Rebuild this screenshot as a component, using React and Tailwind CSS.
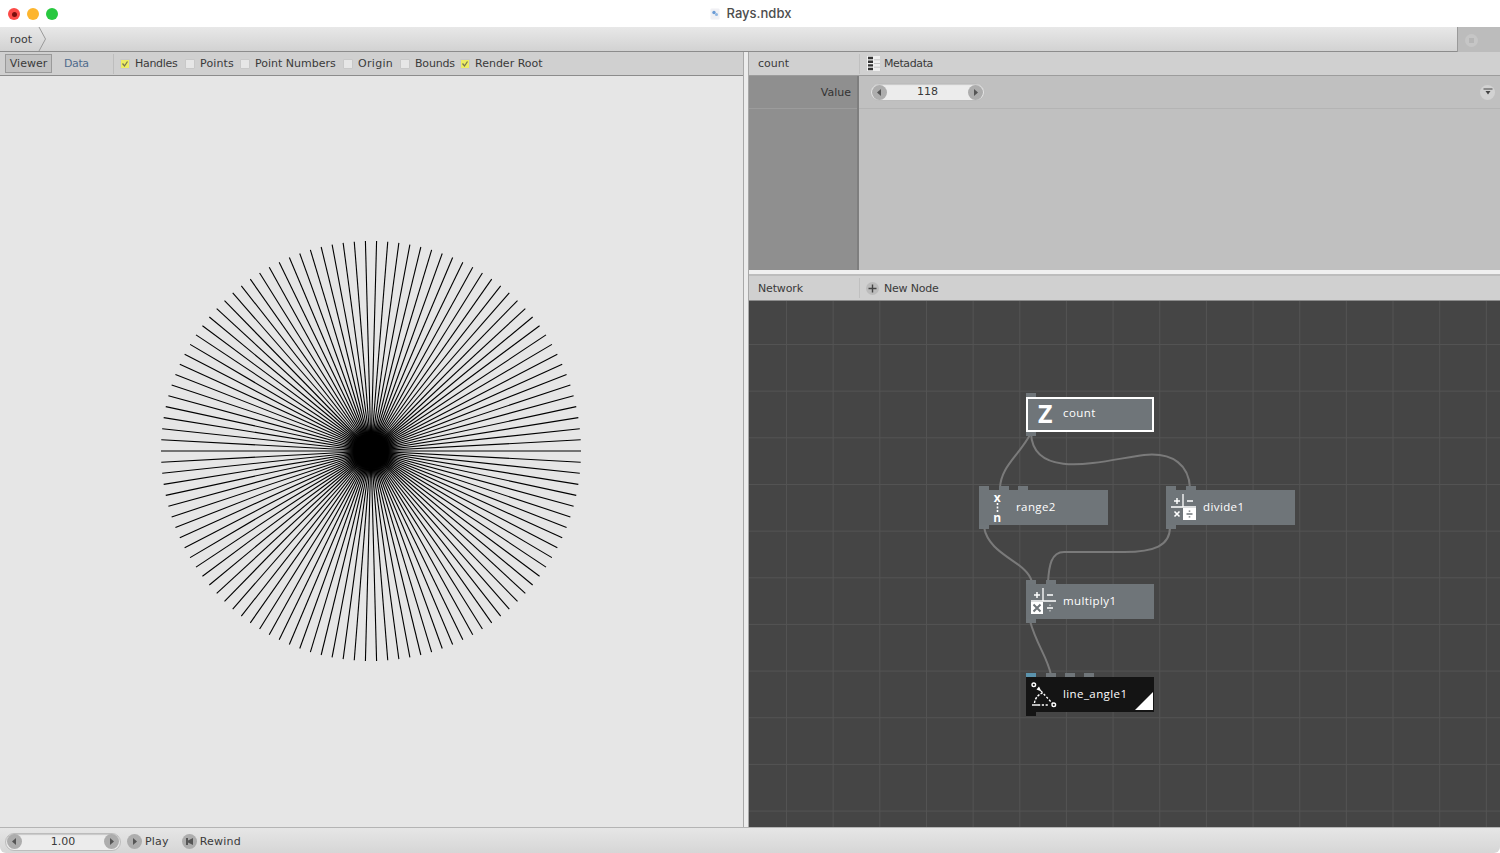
const rays = Array.from({ length: 118 }, (_, i) => (i * 2 * Math.PI) / 118)

function Rays() {
  return (
    <svg width="440" height="440" viewBox="0 0 440 440" className="block">
      <defs>
        <radialGradient id="core">
          <stop offset="0.62" stopColor="#000" stopOpacity="1" />
          <stop offset="1" stopColor="#000" stopOpacity="0" />
        </radialGradient>
      </defs>
      {rays.map((a, i) => (
        <line key={i} x1="220" y1="220" x2={220 + 210 * Math.cos(a)} y2={220 + 210 * Math.sin(a)} stroke="#000" strokeWidth="1.1" />
      ))}
      <circle cx="220" cy="220" r="28" fill="url(#core)" />
    </svg>
  )
}

function Check({ label, checked, className = '' }) {
  return (
    <div className={`flex items-center ${className}`}>
      <span className={`relative mr-[5px] h-[10px] w-[10px] rounded-[1px] border border-[#c8c8c8] ${checked ? 'bg-[#ecec62]' : 'bg-[#e6e6e6]'}`}>
        {checked && (
          <svg width="8" height="8" viewBox="0 0 8 8" className="absolute left-0 top-0">
            <path d="M1.5 3.5 L3.5 6 L6.5 1.5" stroke="#7a7a50" strokeWidth="1.3" fill="none" />
          </svg>
        )}
      </span>
      <span className="pt-[2px]">{label}</span>
    </div>
  )
}

function RoundBtn({ dir }) {
  return (
    <span className="flex h-[15px] w-[15px] items-center justify-center rounded-full bg-[#adadad]">
      <svg width="9" height="9" viewBox="0 0 9 9">
        {dir === 'left' && <path d="M6 1 L2 4.5 L6 8 Z" fill="#555" />}
        {dir === 'right' && <path d="M3 1 L7 4.5 L3 8 Z" fill="#555" />}
        {dir === 'rewind' && <path d="M1 1 H3 V3.5 L8 1 V8 L3 5.5 V8 H1 Z" fill="#555" />}
      </svg>
    </span>
  )
}

function Stepper({ value, className = '' }) {
  return (
    <div className={`flex h-[18px] items-center justify-between rounded-full border border-[#bcbcbc] bg-[#ececec] px-[1px] shadow-[inset_0_1px_1px_#c8c8c8] ${className}`}>
      <RoundBtn dir="left" />
      <span className="pt-[1px]">{value}</span>
      <RoundBtn dir="right" />
    </div>
  )
}

function Port({ left, color = 'bg-[#70767a]' }) {
  return <span className={`absolute top-[-4px] h-[4px] w-[10px] ${color}`} style={{ left }} />
}

function Node({ x, y, w = 128, label, dark, selected, ports, icon }) {
  return (
    <div className="absolute h-[35px]" style={{ left: x, top: y, width: w }}>
      {ports.map((p, i) => (
        <Port key={i} left={p} color={dark && i === 0 ? 'bg-[#5b93ad]' : 'bg-[#70767a]'} />
      ))}
      <div className={`flex h-full w-full items-center font-['Open_Sans',sans-serif] text-[11.5px] tracking-[0.4px] text-white ${dark ? 'bg-[#141414]' : 'bg-[#6f7579]'} ${selected ? 'border-2 border-white' : ''}`}>
        <span className={`flex shrink-0 items-center justify-center ${selected ? 'w-[35px]' : 'w-[37px]'}`}>{icon}</span>
        <span className={selected ? 'pb-[3px]' : 'pb-[2px]'}>{label}</span>
      </div>
      <span className={`absolute bottom-[-4px] left-0 h-[4px] w-[10px] ${dark ? 'bg-[#141414]' : 'bg-[#70767a]'}`} />
      {dark && (
        <svg width="18" height="18" viewBox="0 0 18 18" className="absolute bottom-[2px] right-[1px]">
          <path d="M18 0 V18 H0 Z" fill="#fff" />
        </svg>
      )}
    </div>
  )
}

function MathIcon({ filled }) {
  return (
    <svg width="28" height="28" viewBox="0 0 28 28" stroke="#fff" fill="none" strokeWidth="1.3" className="ml-[-1px] mt-[-2px]">
      <path d="M13 1 V14 M1 14 H26" />
      <path d="M4 8 H10 M7 5 V11 M17 8 H23" strokeWidth="1.5" />
      {filled === 'times' ? (
        <>
          <rect x="1" y="15" width="12" height="12" fill="#fff" stroke="none" />
          <path d="M3.5 17.5 L10.5 24.5 M10.5 17.5 L3.5 24.5" stroke="#6f7579" strokeWidth="2" />
          <path d="M17 21 H23 M20 17.8 V18.4 M20 23.6 V24.2" strokeWidth="1.5" />
        </>
      ) : (
        <>
          <path d="M4.5 18.5 L9.5 23.5 M9.5 18.5 L4.5 23.5" strokeWidth="1.6" />
          <rect x="13" y="15" width="13" height="12" fill="#fff" stroke="none" />
          <path d="M16.5 21 H22.5 M19.5 17.4 V18.8 M19.5 23.2 V24.6" stroke="#6f7579" strokeWidth="1.6" />
        </>
      )}
    </svg>
  )
}

function RangeIcon() {
  return (
    <span className="flex flex-col items-center text-[12px] font-bold leading-[9px] text-white">
      <span>x</span>
      <svg width="3" height="9" viewBox="0 0 3 9" className="my-[1px]">
        <path d="M1.5 0 V2 M1.5 3.5 V5.5 M1.5 7 V9" stroke="#fff" strokeWidth="1.6" />
      </svg>
      <span>n</span>
    </span>
  )
}

function LineAngleIcon() {
  return (
    <svg width="30" height="30" viewBox="0 0 30 30" fill="none" stroke="#fff" strokeWidth="1.4">
      <circle cx="3.8" cy="4.8" r="1.8" />
      <path d="M9 6.5 L11.5 11.5 L6.5 9.5 Z" fill="#fff" stroke="none" />
      <path d="M11 11 L22.5 23.5" strokeDasharray="2.2 1.8" />
      <path d="M4.5 23 C5 18.5 8 14.5 12.5 13" strokeDasharray="2.4 1.4" />
      <path d="M2 25 H8" />
      <path d="M8 25 H19" strokeDasharray="2.2 1.6" />
      <circle cx="23.8" cy="24.8" r="1.8" />
    </svg>
  )
}

export default function App() {
  return (
    <div className="flex h-[853px] w-[1500px] flex-col overflow-hidden bg-white font-['DejaVu_Sans',sans-serif] text-[11px] text-[#3a3a3a]">
      {/* title bar */}
      <div className="relative flex h-[27px] shrink-0 items-center justify-center bg-white">
        <div className="absolute left-[8px] top-[8px] flex gap-[7px]">
          <span className="flex h-[12px] w-[12px] items-center justify-center rounded-full bg-[#fc4a47]">
            <span className="h-[5px] w-[5px] rounded-full bg-[#7a0f0d]" />
          </span>
          <span className="h-[12px] w-[12px] rounded-full bg-[#fdb52e]" />
          <span className="h-[12px] w-[12px] rounded-full bg-[#27c83f]" />
        </div>
        <div className="flex items-center font-['Inter',sans-serif] text-[13px] font-medium text-[#4d4d4d]">
          <svg width="12" height="12" viewBox="0 0 12 12" className="mr-[6px]">
            <rect x="1.5" y="0.5" width="9" height="11" rx="1" fill="#f0f0f4" />
            <circle cx="5" cy="4.5" r="1.7" fill="#6b9bd6" />
            <circle cx="7.5" cy="6.5" r="1.5" fill="#8fb6e2" />
          </svg>
          Rays.ndbx
        </div>
      </div>

      {/* breadcrumb */}
      <div className="flex h-[25px] shrink-0 items-stretch">
        <div className="relative flex flex-1 items-center border-b border-[#8c8c8c] bg-gradient-to-b from-[#e8e8e8] to-[#d2d2d2] pl-[10px]">
          <span className="pt-[2px]">root</span>
          <svg width="10" height="24" viewBox="0 0 10 24" className="absolute left-[38px] top-0">
            <path d="M1 0 L7.5 12 L1 24" fill="none" stroke="#9a9a9a" />
          </svg>
        </div>
        <div className="flex w-[43px] items-center border-l border-[#9a9a9a] bg-[#bcbcbc] pl-[7px] pt-[1px]">
          <span className="flex h-[13px] w-[13px] items-center justify-center rounded-full bg-[#c6c6c6]">
            <span className="h-[5px] w-[5px] bg-[#b6b6b6]" />
          </span>
        </div>
      </div>

      <div className="flex min-h-0 flex-1">
        {/* viewer */}
        <div className="flex w-[743px] shrink-0 flex-col">
          <div className="flex h-[24px] shrink-0 items-center border-b border-[#8c8c8c] bg-[#d0d0d0]">
            <div className="ml-[5px] flex h-[19px] w-[47px] items-center justify-center border border-[#9a9a9a] bg-[#c2c2c2] pt-[1px]">Viewer</div>
            <span className="ml-[12px] w-[25px] pt-[2px] tracking-[-0.4px] text-[#4f6b8c]">Data</span>
            <span className="ml-[24px] h-[20px] w-px bg-[#bdbdbd]" />
            <Check label="Handles" checked className="ml-[6px] w-[65px] tracking-[-0.3px]" />
            <Check label="Points" className="w-[55px] tracking-[0.15px]" />
            <Check label="Point Numbers" className="w-[103px]" />
            <Check label="Origin" className="w-[57px] tracking-[0.3px]" />
            <Check label="Bounds" className="w-[60px] tracking-[-0.2px]" />
            <Check label="Render Root" checked />
          </div>
          <div className="relative flex-1 bg-[#e6e6e6]">
            <div className="absolute left-[151.3px] top-[155px]">
              <Rays />
            </div>
          </div>
        </div>

        <div className="w-[6px] shrink-0 border-x border-[#a8a8a8] bg-[#ececec]" />

        {/* right side */}
        <div className="flex min-w-0 flex-1 flex-col">
          <div className="flex h-[24px] shrink-0 items-center border-b border-[#9c9c9c] bg-[#d0d0d0]">
            <span className="w-[110px] pl-[9px] pt-[2px]">count</span>
            <span className="h-[20px] w-px bg-[#c0c0c0]" />
            <svg width="13" height="15" viewBox="0 0 13 15" className="ml-[7px] mr-[4px]">
              <rect x="0" y="0" width="13" height="15" fill="#f0f0f0" />
              <path d="M1 2 H6 M1 5.7 H6 M1 9.4 H6 M1 13 H6" stroke="#333" strokeWidth="2.4" />
              <path d="M7 3.8 H13 M7 7.5 H13 M7 11.2 H13" stroke="#c4c4c4" strokeWidth="1" />
            </svg>
            <span className="pt-[2px] tracking-[-0.4px]">Metadata</span>
          </div>
          <div className="flex h-[194px] shrink-0">
            <div className="w-[110px] shrink-0 border-r-2 border-[#7e7e7e] bg-[#8f8f8f]">
              <div className="flex h-[33px] items-center justify-end border-b border-[#9c9c9c] pr-[6px] pt-[2px] text-[#333]">Value</div>
            </div>
            <div className="flex-1 bg-[#c0c0c0]">
              <div className="flex h-[33px] items-center justify-between border-b border-[#b4b4b4] pl-[11px] pr-[5px]">
                <Stepper value="118" className="w-[115px]" />
                <span className="flex h-[15px] w-[15px] items-center justify-center rounded-full bg-[#d2d2d2]">
                  <svg width="10" height="8" viewBox="0 0 10 8">
                    <path d="M0.5 1 H9.5" stroke="#444" />
                    <path d="M2.5 3 H7.5 L5 6.5 Z" fill="#444" />
                  </svg>
                </span>
              </div>
            </div>
          </div>
          <div className="h-[6px] shrink-0 border-b-2 border-[#bdbdbd] bg-[#f0f0f0]" />
          <div className="flex h-[25px] shrink-0 items-center border-b border-[#8c8c8c] bg-[#d0d0d0]">
            <span className="w-[110px] pl-[9px] pt-[2px] tracking-[-0.15px]">Network</span>
            <span className="h-[20px] w-px bg-[#c0c0c0]" />
            <span className="ml-[6px] mr-[5px] flex h-[13px] w-[13px] items-center justify-center rounded-full bg-[#bcbcbc]">
              <svg width="9" height="9" viewBox="0 0 9 9">
                <path d="M4.5 0.5 V8.5 M0.5 4.5 H8.5" stroke="#444" strokeWidth="1.4" />
              </svg>
            </span>
            <span className="pt-[2px] tracking-[-0.2px]">New Node</span>
          </div>
          <div className="relative flex-1 overflow-hidden bg-[#454545] bg-[linear-gradient(#535353_1px,transparent_1px),linear-gradient(90deg,#535353_1px,transparent_1px)] bg-[size:46.67px_46.67px] bg-[position:37px_43px]">
            <svg width="751" height="526" viewBox="0 0 751 526" className="absolute left-0 top-0" fill="none" stroke="#7a7a7a" strokeWidth="2">
              <path d="M282 132 C270 155 252 165 251 187" />
              <path d="M282 132 C284 182 360 158 395 154 C425 151 440 165 441 187" />
              <path d="M235 226 C240 255 278 260 283 281" />
              <path d="M421 226 C421 245 405 251 375 251 L315 251 C302 251 300 265 299 281" />
              <path d="M281 320 C288 345 298 355 302 374" />
            </svg>
            <Node x={277} y={96} label="count" selected ports={[0]} icon={<span className="pb-[2px] text-[25px] font-bold leading-none">Z</span>} />
            <Node x={230} y={189} w={129} label="range2" ports={[0, 20, 39]} icon={<RangeIcon />} />
            <Node x={417} y={189} w={129} label="divide1" ports={[0, 20]} icon={<MathIcon filled="divide" />} />
            <Node x={277} y={283} label="multiply1" ports={[0, 20]} icon={<MathIcon filled="times" />} />
            <Node x={277} y={376} label="line_angle1" dark ports={[0, 20, 39, 58]} icon={<LineAngleIcon />} />
          </div>
        </div>
      </div>

      {/* bottom bar */}
      <div className="flex h-[26px] shrink-0 items-center rounded-b-[6px] border-t border-[#b4b4b4] bg-gradient-to-b from-[#e6e6e6] to-[#d6d6d6] pl-[5px] pt-[2px]">
        <Stepper value="1.00" className="w-[116px]" />
        <span className="ml-[6px] mr-[3px]"><RoundBtn dir="right" /></span>
        <span className="pt-[2px] tracking-[0.2px]">Play</span>
        <span className="ml-[13px] mr-[3px]"><RoundBtn dir="rewind" /></span>
        <span className="pt-[2px] tracking-[0.2px]">Rewind</span>
      </div>
    </div>
  )
}
